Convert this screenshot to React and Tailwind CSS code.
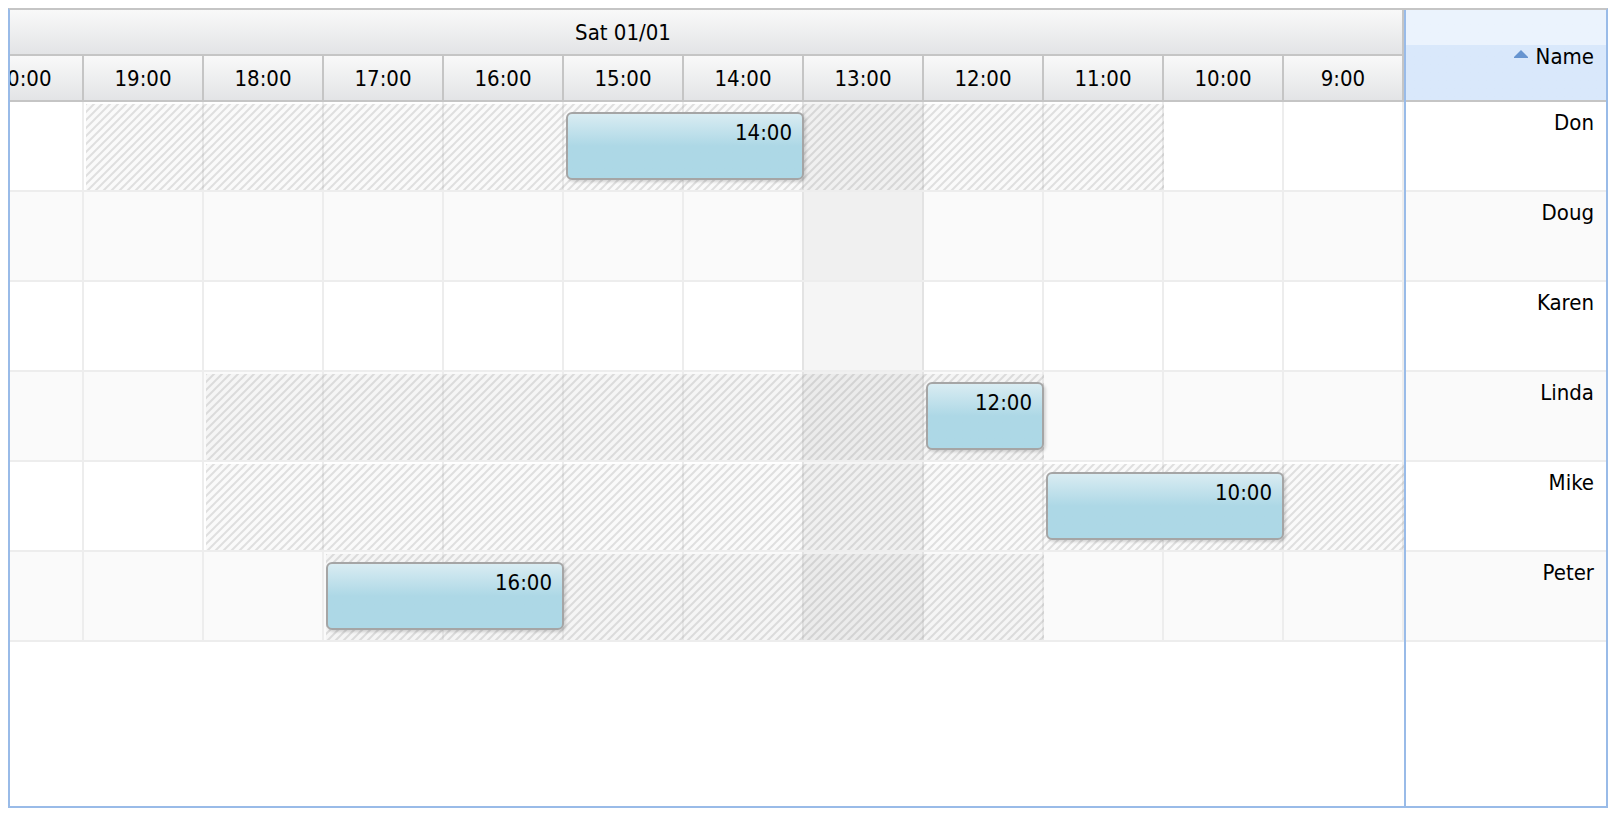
import clsx from "clsx";

const hours = ["20:00", "19:00", "18:00", "17:00", "16:00", "15:00", "14:00", "13:00", "12:00", "11:00", "10:00", "9:00"]

// zones and events are placed from the right edge, one hour is 120px
const resources = [
    { name: "Don", zone: "right-[240px] w-[1078px]", event: { label: "14:00", place: "right-[600px] w-[238px]" } },
    { name: "Doug" },
    { name: "Karen" },
    { name: "Linda", zone: "right-[360px] w-[838px]", event: { label: "12:00", place: "right-[360px] w-[118px]" } },
    { name: "Mike", zone: "right-0 w-[1198px]", event: { label: "10:00", place: "right-[120px] w-[238px]" } },
    { name: "Peter", zone: "right-[360px] w-[718px]", event: { label: "16:00", place: "right-[840px] w-[238px]" } },
]

const headerFill = "bg-linear-to-b from-[#f9f9f9] to-[#e3e4e6] border-[#c5c5c5] pt-[2px]"

const Hatch = ({ id, className }) => (
    <svg className={clsx("absolute top-[2px] h-[86px]", className)} aria-hidden="true">
        <defs>
            <pattern id={id} width="8" height="8" patternUnits="userSpaceOnUse">
                <path d="M-2 2L2 -2M-2 10L10 -2M6 10L10 6" stroke="#808080" strokeOpacity="0.22" strokeWidth="2" />
            </pattern>
        </defs>
        <rect width="100%" height="100%" fill="#808080" fillOpacity="0.04" />
        <rect width="100%" height="100%" fill={`url(#${id})`} />
    </svg>
)

const TimeRow = ({ resource, odd }) => (
    <div className={clsx("relative flex h-[90px] justify-end overflow-hidden border-b-2 border-[#ededed]", odd && "bg-[#fafafa]")}>
        {hours.map((hour) => (
            <div key={hour} className="w-[120px] shrink-0 border-r-2 border-[#ededed] last:border-r-0"></div>
        ))}
        {/* lunch break */}
        <div className="absolute top-0 right-[480px] h-[88px] w-[122px] bg-black/4"></div>
        {resource.zone && <Hatch id={`hatch-${resource.name}`} className={resource.zone} />}
        {resource.event && (
            <button className={clsx("absolute top-[10px] flex h-[68px] justify-end rounded-md border-2 border-[#a5a5a5] bg-linear-to-b from-[#d9ecf2] to-[#add8e6] to-50% px-[10px] pt-[4px] shadow-[2px_2px_3px_rgba(0,0,0,0.15)]", resource.event.place)}>
                {resource.event.label}
            </button>
        )}
    </div>
)

const App = () => {
    return (
        <div className="h-screen bg-white p-2 font-['DejaVu_Sans_Condensed','DejaVu_Sans',sans-serif] text-[22px] leading-[30px] text-black">
            <div className="flex h-full border-2 border-[#99bbe8] border-t-[#c5c5c5]">

                {/* schedule */}
                <div className="flex min-w-0 flex-1 flex-col overflow-hidden">
                    <div className={clsx("flex h-[46px] items-center justify-center border-r-2 border-b-2 pr-[166px]", headerFill)}>Sat 01/01</div>
                    <div className="flex h-[46px] justify-end">
                        {hours.map((hour) => (
                            <div key={hour} className={clsx("flex w-[120px] shrink-0 items-center justify-center border-r-2 border-b-2", headerFill)}>{hour}</div>
                        ))}
                    </div>
                    <div>
                        {resources.map((resource, index) => <TimeRow key={resource.name} resource={resource} odd={index % 2 === 1} />)}
                    </div>
                </div>

                {/* names */}
                <div className="w-[202px] shrink-0 border-l-2 border-[#99bbe8]">
                    <table className="w-full border-separate border-spacing-0 text-right">
                        <thead>
                            <tr>
                                <th className="h-[92px] border-b-2 border-[#c5c5c5] bg-linear-to-b from-[#ebf3fd] from-39% to-[#d9e8fb] to-39% px-3 pt-[26px] pb-0 align-top font-normal">
                                    <button className="inline-flex gap-[8px]">
                                        <svg className="mt-2 h-[8px] w-[14px]" viewBox="0 0 14 8" aria-hidden="true"><path d="M7 0L14 7V8H0V7Z" fill="#6694d0" /></svg>
                                        Name
                                    </button>
                                </th>
                            </tr>
                        </thead>
                        <tbody>
                            {resources.map((resource) => (
                                <tr key={resource.name} className="even:bg-[#fafafa]">
                                    <td className="h-[90px] border-b-2 border-[#ededed] px-3 pt-[6px] align-top">{resource.name}</td>
                                </tr>
                            ))}
                        </tbody>
                    </table>
                </div>
            </div>
        </div>
    )
}

export default App
